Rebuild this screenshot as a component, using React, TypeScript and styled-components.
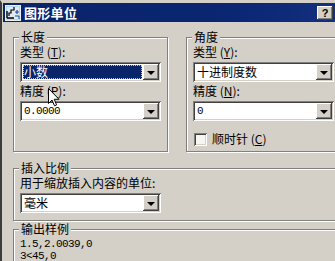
import styled, { createGlobalStyle } from "styled-components";

const GlobalStyle = createGlobalStyle`
  html, body {
    margin: 0;
    padding: 0;
    background: #d4d0c8;
  }
  body {
    font-family: "Noto Sans CJK SC", "Noto Sans", sans-serif;
    font-size: 12px;
    color: #000;
  }
`;

const FACE = "#d4d0c8";

function App() {
  return (
    <>
      <GlobalStyle />
      <Window>
        <TitleBar>
          <AppIcon />
          <Title>图形单位</Title>
          <HelpButton>?</HelpButton>
        </TitleBar>
        <Body>
          <Row>
            <Group $width={155}>
              <Legend>长度</Legend>
              <FieldLabel>
                类型 (<u>T</u>):
              </FieldLabel>
              <Combo value="小数" selected />
              <FieldLabel $gap={2}>
                精度 (<u>P</u>):
              </FieldLabel>
              <Combo value="0.0000" mono />
            </Group>
            <Group $width={155}>
              <Legend>角度</Legend>
              <FieldLabel>
                类型 (<u>Y</u>):
              </FieldLabel>
              <Combo value="十进制度数" />
              <FieldLabel $gap={2}>
                精度 (<u>N</u>):
              </FieldLabel>
              <Combo value="0" mono />
              <CheckRow>
                <CheckBox />
                <span>
                  顺时针 (<u>C</u>)
                </span>
              </CheckRow>
            </Group>
          </Row>
          <Group $width={340} $top={9} $bottom={7}>
            <Legend>插入比例</Legend>
            <FieldLabel>用于缩放插入内容的单位:</FieldLabel>
            <Combo value="毫米" />
          </Group>
          <Group $width={340} $top={1} $bottom={8}>
            <Legend>输出样例</Legend>
            <Sample>
              1.5,2.0039,0
              <br />
              3&lt;45,0
            </Sample>
          </Group>
        </Body>
        <Cursor />
      </Window>
    </>
  );
}

function Combo({
  value,
  selected,
  mono,
}: {
  value: string;
  selected?: boolean;
  mono?: boolean;
}) {
  return (
    <ComboBox>
      <ComboText $mono={mono}>
        <ComboValue $selected={selected}>{value}</ComboValue>
      </ComboText>
      <DropButton>
        <Arrow />
      </DropButton>
    </ComboBox>
  );
}

function AppIcon() {
  return (
    <svg width="16" height="16" viewBox="0 0 16 16" style={{ flexShrink: 0 }}>
      <rect x="0.5" y="0.5" width="15" height="15" fill="#b8d4e8" stroke="#e8f0f8" />
      <rect x="2" y="2" width="12" height="12" fill="#dfeaf4" />
      <path d="M2 13 L2 6 M2 13 L9 13" stroke="#000" strokeWidth="1.4" fill="none" />
      <path d="M4 11 L4 8 L6 8 L6 5 L9 5 L9 2" stroke="#000" strokeWidth="1.2" fill="none" />
      <path d="M10 7 L14 7 M12 5 L12 9" stroke="#1a4fa0" strokeWidth="1.2" />
      <path d="M10 11 L14 11 L14 14" stroke="#1a4fa0" strokeWidth="1" fill="none" />
    </svg>
  );
}

function Cursor() {
  return (
    <CursorWrap>
      <svg width="12" height="19" viewBox="0 0 12 19">
        <path
          d="M0.5 0.5 L0.5 15.5 L4 12 L6.5 17.8 L8.6 16.9 L6.2 11.3 L11 11.3 Z"
          fill="#fff"
          stroke="#000"
          strokeWidth="1"
          strokeLinejoin="miter"
        />
      </svg>
    </CursorWrap>
  );
}

const Window = styled.div`
  position: relative;
  width: 335px;
  height: 261px;
  box-sizing: border-box;
  overflow: hidden;
  border-top: 3px solid ${FACE};
  border-left: 2px solid #3c3c3c;
  padding-left: 1px;
  background: ${FACE};
`;

const TitleBar = styled.div`
  display: flex;
  align-items: center;
  gap: 3px;
  height: 19px;
  padding: 0 2px 0 2px;
  background: linear-gradient(to right, #0a246a 0%, #0b2672 70%, #13307e 100%);
`;

const Title = styled.div`
  flex: 1;
  color: #fff;
  font-weight: bold;
  font-size: 13px;
  line-height: 19px;
  letter-spacing: 0.3px;
`;

const HelpButton = styled.div`
  width: 16px;
  height: 14px;
  display: flex;
  align-items: center;
  justify-content: center;
  background: ${FACE};
  font-family: "Liberation Sans", sans-serif;
  font-weight: bold;
  font-size: 11px;
  line-height: 14px;
  box-shadow: inset -1px -1px #404040, inset 1px 1px #fff, inset -2px -2px #808080;
`;

const Body = styled.div`
  padding: 8px 0 0 10px;
`;

const Row = styled.div`
  display: flex;
  gap: 18px;
  align-items: stretch;
`;

const Group = styled.fieldset<{ $width: number; $top?: number; $bottom?: number }>`
  flex-shrink: 0;
  width: ${(p) => p.$width}px;
  box-sizing: border-box;
  margin: ${(p) => p.$top ?? 0}px 0 0 0;
  padding: 0 6px ${(p) => p.$bottom ?? 5}px 6px;
  min-inline-size: 0;
  border: 1px solid #808080;
  box-shadow: inset 1px 1px #fff, 1px 1px #fff;
`;

const Legend = styled.legend`
  padding: 0 2px;
  margin-left: -1px;
  line-height: 14px;
  background: ${FACE};
`;

const FieldLabel = styled.div<{ $gap?: number }>`
  margin-top: ${(p) => p.$gap ?? 1}px;
  margin-bottom: 3px;
  line-height: 14px;
  white-space: nowrap;

  u {
    text-underline-offset: 1px;
  }
`;

const ComboBox = styled.div`
  display: flex;
  width: 141px;
  height: 20px;
  box-sizing: border-box;
  padding: 2px;
  background: #fff;
  box-shadow: inset 1px 1px #808080, inset -1px -1px #fff, inset 2px 2px #404040,
    inset -2px -2px ${FACE};
`;

const ComboText = styled.div<{ $mono?: boolean }>`
  flex: 1;
  display: flex;
  padding: 1px;
  font-family: ${(p) =>
    p.$mono
      ? `"Liberation Mono", "DejaVu Sans Mono", monospace`
      : `"Noto Sans CJK SC", "Noto Sans", sans-serif`};
  font-size: ${(p) => (p.$mono ? "11px" : "12px")};
  letter-spacing: ${(p) => (p.$mono ? "-0.6px" : "0")};
`;

const ComboValue = styled.div<{ $selected?: boolean }>`
  flex: 1;
  line-height: 14px;
  padding-left: 1px;
  background: ${(p) => (p.$selected ? "#0a246a" : "transparent")};
  color: ${(p) => (p.$selected ? "#fff" : "#000")};
  outline: ${(p) => (p.$selected ? "1px dotted #e0c080" : "none")};
  outline-offset: -1px;
`;

const DropButton = styled.div`
  width: 16px;
  display: flex;
  align-items: center;
  justify-content: center;
  background: ${FACE};
  box-shadow: inset -1px -1px #404040, inset 1px 1px #fff, inset -2px -2px #808080;
`;

const Arrow = styled.div`
  width: 0;
  height: 0;
  margin-top: 1px;
  border-left: 4px solid transparent;
  border-right: 4px solid transparent;
  border-top: 4px solid #000;
`;

const CheckRow = styled.label`
  display: flex;
  align-items: center;
  gap: 5px;
  margin-top: 11px;
  margin-left: 1px;
  line-height: 14px;
`;

const CheckBox = styled.span`
  width: 13px;
  height: 13px;
  box-sizing: border-box;
  background: #f6f6f2;
  box-shadow: inset 1px 1px #808080, inset -1px -1px #fff, inset 2px 2px #404040,
    inset -2px -2px ${FACE};
`;

const Sample = styled.div`
  padding-top: 2px;
  font-family: "Liberation Mono", "DejaVu Sans Mono", monospace;
  font-size: 11px;
  letter-spacing: -0.6px;
  line-height: 12px;
`;

const CursorWrap = styled.div`
  position: absolute;
  left: 46px;
  top: 85px;
  line-height: 0;
`;

export default App;
